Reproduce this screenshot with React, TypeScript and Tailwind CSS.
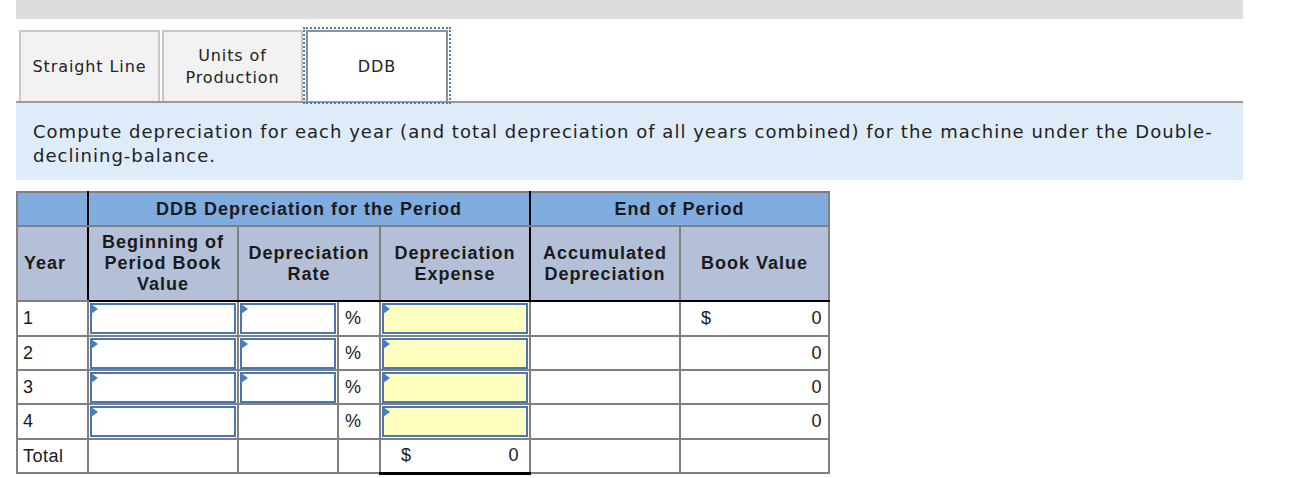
import React from 'react';

const verdana = { fontFamily: '"DejaVu Sans", Verdana, sans-serif' };
const arial = { fontFamily: '"Liberation Sans", Arial, sans-serif' };

const InputBox = ({ yellow = false }: { yellow?: boolean }) => (
  <div className={`relative h-[31px] mx-[1px] border-2 border-[#4a76b3] ${yellow ? 'bg-[#ffffbf]' : 'bg-white'}`}>
    <span className="absolute left-[-1px] top-[-1px] w-0 h-0 border-y-[5px] border-y-transparent border-l-[7px] border-l-[#4a7ebb]" />
  </div>
);

const rows = [
  { year: '1', rate: true, book: true, h: 'h-[35px]' },
  { year: '2', rate: true, book: false, h: 'h-[34px]' },
  { year: '3', rate: true, book: false, h: 'h-[34px]' },
  { year: '4', rate: false, book: false, h: 'h-[35px]' },
];

const cell = 'border-2 border-[#808080] p-0 align-middle';

export default function App() {
  return (
    <div className="w-[1290px] h-[478px] bg-white text-[#222]">
      <div className="ml-[16px] w-[1227px] h-[19px] bg-[#dddddd]" />

      {/* tabs */}
      <div className="ml-[16px] w-[1227px] mt-[11px] flex items-end border-b-2 border-[#999] pl-[3px] tracking-[0.9px]" style={verdana}>
        <div className="w-[141px] h-[71px] bg-[#f2f2f2] border-2 border-b-0 border-[#c8c8c8] flex items-center justify-center text-[16px] leading-[22px] text-center">
          Straight Line
        </div>
        <div className="ml-[2px] w-[141px] h-[71px] bg-[#f2f2f2] border-2 border-b-0 border-[#c8c8c8] flex items-center justify-center text-[16px] leading-[22px] text-center">
          Units of<br />Production
        </div>
        <div className="ml-[3px] w-[142px] h-[71px] bg-white border-2 border-b-0 border-[#909090] outline-2 outline-dotted outline-[#4a7ebb] outline-offset-[1px] flex items-center justify-center text-[16px] text-center">
          DDB
        </div>
      </div>

      {/* instruction */}
      <div className="ml-[16px] w-[1227px] h-[77px] bg-[#deebf8] pl-[17px] pr-[8px] pt-[17px] text-[18px] leading-[24px] tracking-[1.02px]" style={verdana}>
        Compute depreciation for each year (and total depreciation of all years combined) for the machine under the Double-declining-balance.
      </div>

      {/* table */}
      <table className="ml-[16px] mt-[11px] border-collapse table-fixed text-[#1a1a1a]" style={arial}>
        <colgroup>
          <col className="w-[71px]" />
          <col className="w-[150px]" />
          <col className="w-[100px]" />
          <col className="w-[42px]" />
          <col className="w-[150px]" />
          <col className="w-[150px]" />
          <col className="w-[149px]" />
        </colgroup>
        <thead className="font-bold text-[18px] leading-[21px] tracking-[1px]">
          <tr className="h-[34px] bg-[#80acdf]">
            <th className={`${cell} border-r-black`} />
            <th colSpan={4} className={`${cell} border-l-black border-r-black`}>DDB Depreciation for the Period</th>
            <th colSpan={2} className={`${cell} border-l-black`}>End of Period</th>
          </tr>
          <tr className="h-[75px] bg-[#b3c0d8]">
            <th className={`${cell} border-r-black text-left pl-[6px]`}>Year</th>
            <th className={`${cell} border-l-black border-b-black`}>Beginning of<br />Period Book<br />Value</th>
            <th colSpan={2} className={`${cell} border-b-black`}>Depreciation<br />Rate</th>
            <th className={`${cell} border-b-black border-r-black`}>Depreciation<br />Expense</th>
            <th className={`${cell} border-l-black border-b-black`}>Accumulated<br />Depreciation</th>
            <th className={`${cell} border-b-black`}>Book Value</th>
          </tr>
        </thead>
        <tbody className="text-[18px] tracking-[0.5px]">
          {rows.map(r => (
            <tr key={r.year} className={r.h}>
              <td className={`${cell} pl-[5px]`}>{r.year}</td>
              <td className={cell}><InputBox /></td>
              <td className={cell}>{r.rate ? <InputBox /> : null}</td>
              <td className={`${cell} pl-[6px]`}>%</td>
              <td className={cell}><InputBox yellow /></td>
              <td className={cell} />
              <td className={`${cell} px-[6px]`}>
                <div className="flex justify-between">
                  <span className="pl-[14px]">{r.book ? '$' : ''}</span>
                  <span>0</span>
                </div>
              </td>
            </tr>
          ))}
          <tr className="h-[34px]">
            <td className={`${cell} pl-[5px]`}>Total</td>
            <td className={cell} />
            <td className={cell} />
            <td className={cell} />
            <td className={`${cell} border-t-black border-b-[3px] border-b-black px-[10px]`}>
              <div className="flex justify-between">
                <span className="pl-[10px]">$</span>
                <span>0</span>
              </div>
            </td>
            <td className={cell} />
            <td className={cell} />
          </tr>
        </tbody>
      </table>
    </div>
  );
}
